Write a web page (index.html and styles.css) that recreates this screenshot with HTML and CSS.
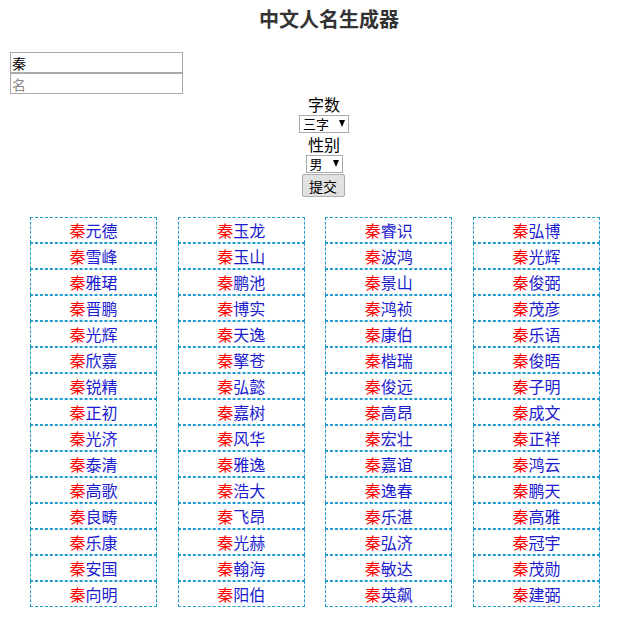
FILE: index.html
```html
<!DOCTYPE html>
<html lang="zh-CN">
<head>
<meta charset="utf-8">
<title>中文人名生成器</title>
<link rel="stylesheet" href="styles.css">
</head>
<body>
<h1 class="title">中文人名生成器</h1>
<div class="inputs">
  <input class="field" type="text" value="秦">
  <input class="field" type="text" placeholder="名">
</div>
<form class="options">
  <div class="label">字数</div>
  <div class="row"><span class="select-wrap"><select class="sel sel-count"><option>三字</option><option>二字</option></select></span></div>
  <div class="label">性别</div>
  <div class="row"><span class="select-wrap"><select class="sel sel-sex"><option>男</option><option>女</option></select></span></div>
  <div class="row"><button class="submit" type="button">提交</button></div>
</form>
<div class="names">
  <div class="col">
    <div class="name"><span class="surname">秦</span>元德</div>
    <div class="name"><span class="surname">秦</span>雪峰</div>
    <div class="name"><span class="surname">秦</span>雅珺</div>
    <div class="name"><span class="surname">秦</span>晋鹏</div>
    <div class="name"><span class="surname">秦</span>光辉</div>
    <div class="name"><span class="surname">秦</span>欣嘉</div>
    <div class="name"><span class="surname">秦</span>锐精</div>
    <div class="name"><span class="surname">秦</span>正初</div>
    <div class="name"><span class="surname">秦</span>光济</div>
    <div class="name"><span class="surname">秦</span>泰清</div>
    <div class="name"><span class="surname">秦</span>高歌</div>
    <div class="name"><span class="surname">秦</span>良畴</div>
    <div class="name"><span class="surname">秦</span>乐康</div>
    <div class="name"><span class="surname">秦</span>安国</div>
    <div class="name"><span class="surname">秦</span>向明</div>
  </div>
  <div class="col">
    <div class="name"><span class="surname">秦</span>玉龙</div>
    <div class="name"><span class="surname">秦</span>玉山</div>
    <div class="name"><span class="surname">秦</span>鹏池</div>
    <div class="name"><span class="surname">秦</span>博实</div>
    <div class="name"><span class="surname">秦</span>天逸</div>
    <div class="name"><span class="surname">秦</span>擎苍</div>
    <div class="name"><span class="surname">秦</span>弘懿</div>
    <div class="name"><span class="surname">秦</span>嘉树</div>
    <div class="name"><span class="surname">秦</span>风华</div>
    <div class="name"><span class="surname">秦</span>雅逸</div>
    <div class="name"><span class="surname">秦</span>浩大</div>
    <div class="name"><span class="surname">秦</span>飞昂</div>
    <div class="name"><span class="surname">秦</span>光赫</div>
    <div class="name"><span class="surname">秦</span>翰海</div>
    <div class="name"><span class="surname">秦</span>阳伯</div>
  </div>
  <div class="col">
    <div class="name"><span class="surname">秦</span>睿识</div>
    <div class="name"><span class="surname">秦</span>波鸿</div>
    <div class="name"><span class="surname">秦</span>景山</div>
    <div class="name"><span class="surname">秦</span>鸿祯</div>
    <div class="name"><span class="surname">秦</span>康伯</div>
    <div class="name"><span class="surname">秦</span>楷瑞</div>
    <div class="name"><span class="surname">秦</span>俊远</div>
    <div class="name"><span class="surname">秦</span>高昂</div>
    <div class="name"><span class="surname">秦</span>宏壮</div>
    <div class="name"><span class="surname">秦</span>嘉谊</div>
    <div class="name"><span class="surname">秦</span>逸春</div>
    <div class="name"><span class="surname">秦</span>乐湛</div>
    <div class="name"><span class="surname">秦</span>弘济</div>
    <div class="name"><span class="surname">秦</span>敏达</div>
    <div class="name"><span class="surname">秦</span>英飙</div>
  </div>
  <div class="col">
    <div class="name"><span class="surname">秦</span>弘博</div>
    <div class="name"><span class="surname">秦</span>光辉</div>
    <div class="name"><span class="surname">秦</span>俊弼</div>
    <div class="name"><span class="surname">秦</span>茂彦</div>
    <div class="name"><span class="surname">秦</span>乐语</div>
    <div class="name"><span class="surname">秦</span>俊晤</div>
    <div class="name"><span class="surname">秦</span>子明</div>
    <div class="name"><span class="surname">秦</span>成文</div>
    <div class="name"><span class="surname">秦</span>正祥</div>
    <div class="name"><span class="surname">秦</span>鸿云</div>
    <div class="name"><span class="surname">秦</span>鹏天</div>
    <div class="name"><span class="surname">秦</span>高雅</div>
    <div class="name"><span class="surname">秦</span>冠宇</div>
    <div class="name"><span class="surname">秦</span>茂勋</div>
    <div class="name"><span class="surname">秦</span>建弼</div>
  </div>
</div>
</body>
</html>
```

FILE: styles.css
```css
html, body {
  margin: 0;
  padding: 0;
  background: #fff;
}
body {
  font-family: "Noto Sans CJK SC", "Noto Sans", sans-serif;
  color: #000;
  font-size: 16px;
}
.title {
  margin: 0;
  padding: 5px 0 0 15px;
  height: 28px;
  font-size: 20px;
  line-height: 28px;
  font-weight: bold;
  color: #333;
  text-align: center;
}
.inputs {
  margin: 19px 0 0 10px;
  display: flex;
  flex-direction: column;
  width: 173px;
}
.field {
  box-sizing: border-box;
  width: 173px;
  height: 21px;
  margin: 0;
  border: 1px solid #a9a9a9;
  padding: 0 1px;
  font-family: "Noto Sans CJK SC", sans-serif;
  font-size: 14px;
  line-height: 19px;
  color: #000;
  background: #fff;
  outline: none;
}
.field::placeholder {
  color: #8a8a8a;
}
.options {
  margin: 0;
  padding-left: 5px;
  display: flex;
  flex-direction: column;
  align-items: center;
}
.label {
  height: 20px;
  font-size: 16px;
  line-height: 20px;
  color: #000;
}
.row {
  display: flex;
  justify-content: center;
}
.select-wrap {
  position: relative;
  display: flex;
  margin: 1px 0 1px 0;
}
.select-wrap::after {
  content: "";
  position: absolute;
  right: 4px;
  top: 5px;
  width: 0;
  height: 0;
  border-left: 3.5px solid transparent;
  border-right: 3.5px solid transparent;
  border-top: 7px solid #000;
  pointer-events: none;
}
.sel {
  -webkit-appearance: none;
  appearance: none;
  box-sizing: border-box;
  height: 18px;
  margin: 0;
  padding: 0 0 0 3px;
  border: 1px solid #a9a9a9;
  border-radius: 0;
  background: #fff;
  font-family: "Noto Sans CJK SC", sans-serif;
  font-size: 13px;
  line-height: 16px;
  color: #000;
  text-align: left;
}
.sel-count {
  width: 50px;
}
.sel-sex {
  width: 37px;
}
.submit {
  box-sizing: border-box;
  width: 43px;
  height: 23px;
  margin: 0 0 0 -2px;
  padding: 0;
  border: 1px solid #adadad;
  border-radius: 2px;
  background: #e1e1e1;
  font-family: "Noto Sans CJK SC", sans-serif;
  font-size: 14px;
  line-height: 20px;
  color: #000;
}
.names {
  display: flex;
  gap: 20.67px;
  margin: 20px 0 0 30px;
}
.col {
  width: 127px;
  display: flex;
  flex-direction: column;
}
.name {
  box-sizing: border-box;
  height: 26px;
  border: 1px dashed #1f9bd0;
  text-align: center;
  font-size: 16px;
  line-height: 24px;
  color: #1c1ccf;
}
.surname {
  color: #ff0000;
}
```
